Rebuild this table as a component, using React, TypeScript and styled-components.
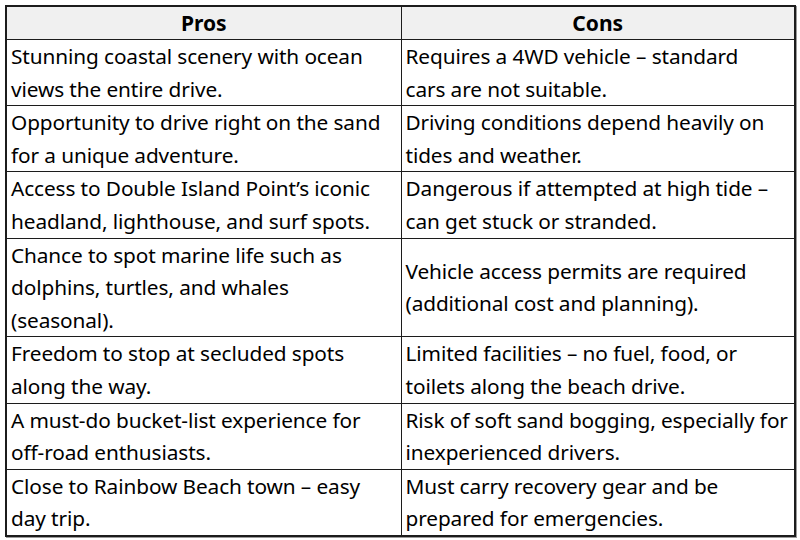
import React from 'react';
import styled, { createGlobalStyle } from 'styled-components';

const GlobalStyle = createGlobalStyle`
  html, body {
    margin: 0;
    padding: 0;
    background: #ffffff;
  }
  body {
    font-family: 'Noto Sans', 'Open Sans', Arial, sans-serif;
    color: #000;
  }
`;

type Row = { pros: string[]; cons: string[] };

const rows: Row[] = [
  {
    pros: ['Stunning coastal scenery with ocean', 'views the entire drive.'],
    cons: ['Requires a 4WD vehicle – standard', 'cars are not suitable.'],
  },
  {
    pros: ['Opportunity to drive right on the sand', 'for a unique adventure.'],
    cons: ['Driving conditions depend heavily on', 'tides and weather.'],
  },
  {
    pros: ['Access to Double Island Point’s iconic', 'headland, lighthouse, and surf spots.'],
    cons: ['Dangerous if attempted at high tide –', 'can get stuck or stranded.'],
  },
  {
    pros: ['Chance to spot marine life such as', 'dolphins, turtles, and whales', '(seasonal).'],
    cons: ['Vehicle access permits are required', '(additional cost and planning).'],
  },
  {
    pros: ['Freedom to stop at secluded spots', 'along the way.'],
    cons: ['Limited facilities – no fuel, food, or', 'toilets along the beach drive.'],
  },
  {
    pros: ['A must-do bucket-list experience for', 'off-road enthusiasts.'],
    cons: ['Risk of soft sand bogging, especially for', 'inexperienced drivers.'],
  },
  {
    pros: ['Close to Rainbow Beach town – easy', 'day trip.'],
    cons: ['Must carry recovery gear and be', 'prepared for emergencies.'],
  },
];

const Sheet = styled.div`
  width: 800px;
  height: 540px;
  box-sizing: border-box;
  padding: 5px 4px 0 5px;
  background: #fff;
`;

const Table = styled.table`
  width: 791px;
  border-collapse: collapse;
  table-layout: fixed;
  border: 2px solid #1c1c1c;
  box-shadow: 1px 1px 0 #9a9a9a;
`;

const HeadCell = styled.th`
  background: #f0f0f0;
  border: 1px solid #1c1c1c;
  height: 32px;
  padding: 0;
  font-size: 21px;
  font-weight: 700;
  text-align: center;
  vertical-align: middle;
  line-height: 32px;
  color: #000;
`;

const Cell = styled.td`
  border: 1px solid #1c1c1c;
  padding: 0 2px 0 4px;
  font-size: 20.8px;
  letter-spacing: -0.1px;
  line-height: 32.6px;
  vertical-align: middle;
  white-space: nowrap;
  overflow: hidden;
  color: #000;
`;

const Lines = ({ lines }: { lines: string[] }) => (
  <>
    {lines.map((line, i) => (
      <React.Fragment key={i}>
        {i > 0 && <br />}
        {line}
      </React.Fragment>
    ))}
  </>
);

export default function App() {
  return (
    <>
      <GlobalStyle />
      <Sheet>
        <Table>
          <colgroup>
            <col style={{ width: '395px' }} />
            <col />
          </colgroup>
          <thead>
            <tr>
              <HeadCell>Pros</HeadCell>
              <HeadCell>Cons</HeadCell>
            </tr>
          </thead>
          <tbody>
            {rows.map((row, i) => (
              <tr key={i}>
                <Cell>
                  <Lines lines={row.pros} />
                </Cell>
                <Cell>
                  <Lines lines={row.cons} />
                </Cell>
              </tr>
            ))}
          </tbody>
        </Table>
      </Sheet>
    </>
  );
}
